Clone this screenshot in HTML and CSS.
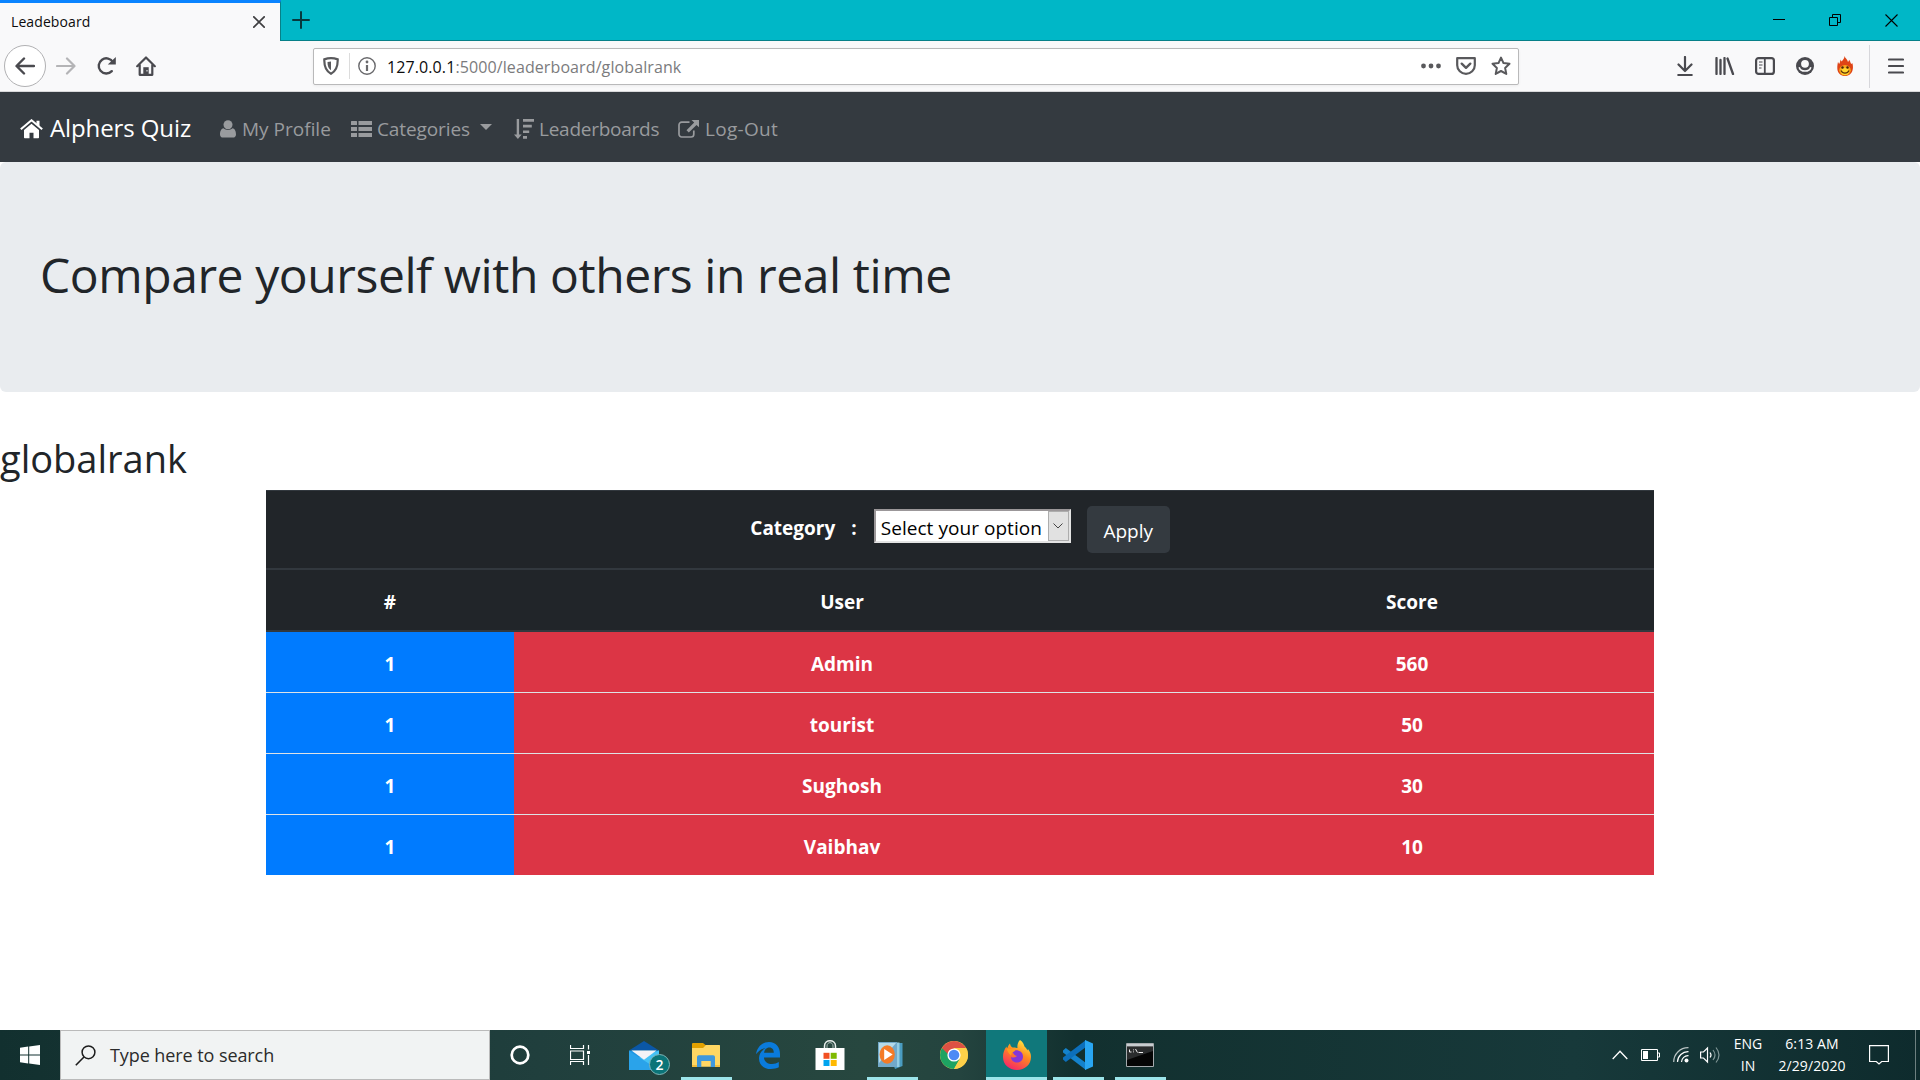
FILE: index.html
```html
<!DOCTYPE html>
<html lang="en">
<head>
<meta charset="utf-8">
<title>Leadeboard</title>
<link rel="stylesheet" href="styles.css">
</head>
<body>
<div class="screen">
  <header class="tabbar">
    <div class="tab"><span class="t tab-title">Leadeboard</span>
      <svg class="tab-close" width="12" height="12" viewBox="0 0 12 12"><path d="M.8.8l10.400 10.400M11.200.8L.8 11.200" stroke="#3e3e40" stroke-width="1.700" stroke-linecap="round"/></svg>
    </div>
    <svg class="newtab" width="18" height="18" viewBox="0 0 18 18"><path d="M9 1v16M1 9h16" stroke="#07393d" stroke-width="2" stroke-linecap="round"/></svg>
    <div class="winctl">
      <svg width="12" height="12" viewBox="0 0 12 12"><path d="M0 5.500h12" stroke="#000"/></svg>
      <svg width="12" height="12" viewBox="0 0 12 12"><path d="M.5 3.500h8v8h-8zM3.500 3.500v-3h8v8h-3" fill="none" stroke="#000"/></svg>
      <svg width="13" height="13" viewBox="0 0 13 13"><path d="M.5.5l12 12M12.500.5l-12 12" stroke="#000" stroke-width="1.100"/></svg>
    </div>
  </header>
  <div class="toolbar">
    <div class="nav-buttons">
      <div class="back"><svg width="20" height="18" viewBox="0 0 20 18"><path d="M19 9H2M9 1.500L1.500 9 9 16.500" fill="none" stroke="#4a4a4f" stroke-width="2.400" stroke-linecap="round" stroke-linejoin="round"/></svg></div>
      <svg width="20" height="18" viewBox="0 0 20 18"><path d="M1 9h17M11 1.500L18.500 9 11 16.500" fill="none" stroke="#b4b4b6" stroke-width="2.200" stroke-linecap="round" stroke-linejoin="round"/></svg>
      <svg width="20" height="20" viewBox="0 0 20 20"><path d="M15.800 15.200A7.600 7.600 0 1 1 17 6.300" fill="none" stroke="#4a4a4f" stroke-width="2.400" stroke-linecap="round"/><path d="M19.800 1v7.600h-8z" fill="#4a4a4f"/></svg>
      <svg width="20" height="20" viewBox="0 0 20 20"><path d="M1.200 10.200L10 1.500l8.800 8.700M3.700 9v9.800h12.600V9" fill="none" stroke="#4a4a4f" stroke-width="2.200" stroke-linecap="round" stroke-linejoin="round"/><path d="M7.300 18.500v-7.300h5.400v7.300z" fill="#4a4a4f"/><path d="M10.500 14h1v1.500h-1z" fill="#fff"/></svg>
    </div>
    <div class="urlbar">
      <svg width="16" height="18" viewBox="0 0 16 18"><path d="M8 1.200c2.300 0 4.500.4 6.700 1.200C14.900 9.500 13.500 14 8 16.700 2.500 14 1.100 9.500 1.300 2.400 3.500 1.600 5.700 1.200 8 1.200z" fill="none" stroke="#59595c" stroke-width="2.200"/><path d="M8 4.500v8.700C5.300 11.400 4.500 9 4.500 5c1.200-.3 2.300-.5 3.500-.5z" fill="#59595c"/></svg>
      <i class="usep"></i>
      <svg width="18" height="18" viewBox="0 0 18 18"><circle cx="9" cy="9" r="8.200" fill="none" stroke="#69696c" stroke-width="1.400"/><path d="M9 8v6" stroke="#69696c" stroke-width="2.200"/><circle cx="9" cy="5" r="1.400" fill="#69696c"/></svg>
      <span class="t url"><b>127.0.0.1</b>:5000/leaderboard/globalrank</span>
      <svg class="dots" width="20" height="6" viewBox="0 0 20 6"><g fill="#59595c"><circle cx="2.500" cy="3" r="2.400"/><circle cx="10" cy="3" r="2.400"/><circle cx="17.500" cy="3" r="2.400"/></g></svg>
      <svg class="pocket" width="20" height="18" viewBox="0 0 20 18"><path d="M1.200 1.200h17.600v7a8.800 8.600 0 0 1-17.600 0z" fill="none" stroke="#59595c" stroke-width="2.200" stroke-linejoin="round"/><path d="M5.700 6.700L10 10.800l4.300-4.100" fill="none" stroke="#59595c" stroke-width="2.400" stroke-linecap="round" stroke-linejoin="round"/></svg>
      <svg width="20" height="20" viewBox="0 0 20 20"><path d="M10 1.600l2.500 5.500 6 .7-4.400 4.100 1.200 6L10 15l-5.300 2.900 1.200-6L1.500 7.800l6-.7z" fill="none" stroke="#59595c" stroke-width="2" stroke-linejoin="round"/></svg>
    </div>
    <div class="ext">
      <svg width="16" height="20" viewBox="0 0 16 20"><path d="M8 1v13.500M1.500 8.500L8 15l6.500-6.500" fill="none" stroke="#4a4a4f" stroke-width="2.200" stroke-linecap="round" stroke-linejoin="round"/><path d="M1.200 19h13.600" stroke="#4a4a4f" stroke-width="2" stroke-linecap="round"/></svg>
      <svg class="library" width="20" height="18" viewBox="0 0 20 18"><path d="M1.500 1v16M5.500 3v14M9.500 1v16M12.500 1.500L18 17" stroke="#4a4a4f" stroke-width="2.300" stroke-linecap="round"/></svg>
      <svg width="20" height="18" viewBox="0 0 20 18"><rect x="1.100" y="1.100" width="17.800" height="15.800" rx="2.500" fill="none" stroke="#4a4a4f" stroke-width="2.200"/><path d="M9.800 1v16" stroke="#4a4a4f" stroke-width="1.800"/><path d="M4 5h3.500M4 8h3.500M4 11h2.500" stroke="#4a4a4f" stroke-width="1.200"/></svg>
      <svg class="account" width="18" height="18" viewBox="0 0 18 18"><circle cx="9" cy="9" r="9" fill="#4a4a4f"/><circle cx="9" cy="6.800" r="3.900" fill="#f9f9fa"/><path d="M3.200 10.200C4.500 15.300 13.500 15.300 14.800 10.200" stroke="#f9f9fa" stroke-width="1.600" fill="none"/></svg>
      <svg width="16" height="20" viewBox="0 0 16 20"><path d="M7.500 0c.5 2 3 3.500 3.500 6 .7-.5 1-1.300 1-2.300C13.500 5 13.200 7 14.500 8l.8-1c.9 2.500.7 5 .4 6.500C15 17.500 12 20 8 20S1 17.500.4 13.500C.2 11 .3 9 1 6c.5.700.8 1.200 1 2C3.500 6.500 2.500 5 4 3.500c0 1 .2 1.500.7 2C5.500 4 7.500 3 7.500 0z" fill="#df4416"/><ellipse cx="8" cy="14.200" rx="5.800" ry="5.300" fill="#f9a61a"/><ellipse cx="8" cy="15.500" rx="4" ry="3.500" fill="#ffd52e"/><circle cx="5.500" cy="11.500" r="1.200" fill="#46210a"/><circle cx="10.500" cy="11.500" r="1.200" fill="#46210a"/><path d="M4 14.500c1.500 3.500 6.500 3.500 8 0" fill="none" stroke="#5c3009" stroke-width="1.200"/></svg>
      <i class="tsep"></i>
      <svg width="16" height="16" viewBox="0 0 16 16"><path d="M1 1.500h14M1 8h14M1 14.500h14" stroke="#4a4a4f" stroke-width="2.200" stroke-linecap="round"/></svg>
    </div>
  </div>

  <nav class="navbar">
    <span class="brand"><svg width="23" height="20" viewBox="0 0 23 20"><path d="M11.500 4.800L19 11v7.500a.7.700 0 0 1-.7.700h-4.800v-5.400h-4v5.400H4.700a.7.700 0 0 1-.7-.7V11z" fill="#fff"/><path d="M.8 10.200L11.500 1.300l10.700 8.900" fill="none" stroke="#fff" stroke-width="2.100"/><path d="M16.500 1.800h3v6l-3-2.500z" fill="#fff"/></svg><span class="t">Alphers Quiz</span></span>
    <a class="item profile"><svg width="16" height="18" viewBox="0 0 16 18"><circle cx="8" cy="4.700" r="4.500"/><path d="M3.500 8.200c2.500 2.300 6.500 2.300 9 0C15 8.500 16 11.500 16 14.500c0 2-1.300 3.100-3 3.100H3c-1.700 0-3-1.100-3-3.100 0-3 1-6 3.500-6.300z"/></svg><span class="t">My Profile</span></a>
    <a class="item cats"><svg width="21" height="16" viewBox="0 0 21 16"><path d="M.6 0h4.800q.6 0 .6.600v3.400H0V.6Q0 0 .6 0zM7.500 0H21v4H7.500zM0 6h6v4H0zM7.500 6H21v4H7.500zM0 12h6v4H0zM7.500 12H21v4H7.500z"/></svg><span class="t">Categories</span><i class="caret"></i></a>
    <a class="item boards"><svg width="20" height="20" viewBox="0 0 20 20"><path d="M2.700 0h2.400v15.500h2.600L3.900 20 0 15.500h2.700zM9 0h11v2.700H9zM9 5.700h8.800v2.700H9zM9 11.400h6.200v2.700H9zM9 17h4v2.700H9z"/></svg><span class="t">Leaderboards</span></a>
    <a class="item logout"><svg width="21" height="18" viewBox="0 0 21 18"><path d="M11.500 2.200H3.700A2.700 2.700 0 0 0 1 4.900v9.400A2.700 2.700 0 0 0 3.700 17h9.400a2.700 2.700 0 0 0 2.700-2.700v-3.800" class="frame"/><path d="M13.500 0H21v7.300l-2.500-2.400-7.700 7.700-2.300-2.300 7.700-7.700z"/></svg><span class="t">Log-Out</span></a>
  </nav>

  <main>
    <section class="jumbotron"><h1><span class="t">Compare yourself with others in real time</span></h1></section>
    <h2><span class="t">globalrank</span></h2>
    <table>
      <colgroup><col class="c1"><col class="c2"><col class="c3"></colgroup>
      <thead>
        <tr class="filter"><th colspan="3"><div class="form"><span class="t label">Category</span><span class="colon">:</span>
          <span class="select"><span class="t opt">Select your option</span><span class="arrow"><svg width="10" height="6" viewBox="0 0 10 6"><path d="M.5.5L5 5 9.500.5" fill="none" stroke="#444"/></svg></span></span>
          <span class="apply"><span class="t">Apply</span></span></div></th></tr>
        <tr class="heads"><th>#</th><th>User</th><th>Score</th></tr>
      </thead>
      <tbody>
        <tr><th>1</th><td>Admin</td><td>560</td></tr>
        <tr><th>1</th><td>tourist</td><td>50</td></tr>
        <tr><th>1</th><td>Sughosh</td><td>30</td></tr>
        <tr><th>1</th><td>Vaibhav</td><td>10</td></tr>
      </tbody>
    </table>
  </main>

  <footer class="taskbar">
    <div class="start"><svg width="20" height="20" viewBox="0 0 20 20"><path d="M0 2.800L8.200 1.600v7.900H0zM9.200 1.500L20 0v9.500H9.200zM0 10.500h8.200v7.900L0 17.200zM9.200 10.500H20V20L9.200 18.500z" fill="#fff"/></svg></div>
    <div class="search"><svg width="21" height="21" viewBox="0 0 21 21"><circle cx="13.500" cy="7.300" r="6.400" fill="none" stroke="#1c1c1c" stroke-width="1.500"/><path d="M9 12L.8 20.300" stroke="#1c1c1c" stroke-width="1.600"/></svg><span class="t">Type here to search</span></div>
    <div class="cell60"><svg width="20" height="20" viewBox="0 0 20 20"><circle cx="10" cy="10" r="8.300" fill="none" stroke="#fff" stroke-width="2.700"/></svg></div>
    <div class="cell60 tv"><svg width="21" height="20" viewBox="0 0 21 20"><path d="M.5 0v3.500h13V0M.5 6h13v8.500H.5zM.5 20v-3.500h13V20M18.500 0v4.500M18.500 10v10" fill="none" stroke="#fff" stroke-width="1.200"/><path d="M17 6h3v3h-3z" fill="#fff"/></svg></div>
    <div class="app mail"><svg width="30" height="29" viewBox="0 0 30 29"><path d="M0 9.500L15 0l15 9.500z" fill="#0b57a6"/><path d="M0 9.500h30V29H0z" fill="#1e96e3"/><path d="M30 9.500V29L9 17z" fill="#45c2f5"/><path d="M0 10v19h30z" fill="#2aa3ea"/><path d="M2.500 9.500h25L15 18.800z" fill="#f3f3f7"/></svg><span class="badge">2</span></div>
    <div class="app run"><svg width="28" height="24" viewBox="0 0 28 24"><path d="M0 1q0-1 1-1h10l2.500 2H27q1 0 1 1v6H0z" fill="#e2a100"/><path d="M0 5h11l3-3h13q1 0 1 1v20q0 .8-1 .8H1q-1 0-1-.8z" fill="#ffd763"/><path d="M5 24V14q0-1.800 1.800-1.800h14.400Q23 12.200 23 14v10h-4.300v-6H9.300v6z" fill="#3f98dc"/><path d="M0 22h5v2H0zM23 22h5v2h-5z" fill="#f3bd3b"/></svg></div>
    <div class="app"><svg width="24" height="27" viewBox="0 0 24 27"><path d="M0 12.200C1.300 4.500 6.500 0 13 0c7 0 11 5.300 11 12v3.500H8c.3 4.700 4 6.500 8 6.500 2.700 0 4.900-.8 6.800-2v5.300C20.500 26.400 18 27 14.800 27 7.500 27 3 22.700 3 16.300c0-4.300 2.300-8 6.500-10C5.500 6.300 2 9.500 0 12.200zM8.100 10.800h9.700c0-3-1.400-5.300-4.500-5.300-3 0-4.800 2.400-5.200 5.300z" fill="#0a7bdc"/></svg></div>
    <div class="app"><svg width="30" height="30" viewBox="0 0 30 30"><path d="M9.500 8V6c0-7 11-7 11 0v2" fill="none" stroke="#e9efed" stroke-width="1.500"/><path d="M12 8V6c0-4.500 6-4.500 6 0v2" fill="none" stroke="#aabab5"/><path d="M.5 8h29v22H.5z" fill="#fff"/><path d="M8.500 12.800h6v6h-6z" fill="#f25022"/><path d="M15.700 12.800h6v6h-6z" fill="#7fba00"/><path d="M8.500 20h6v6h-6z" fill="#00a4ef"/><path d="M15.700 20h6v6h-6z" fill="#ffb900"/></svg></div>
    <div class="app run media"><svg width="25" height="28" viewBox="0 0 25 28"><path d="M7 2h17.500v23L17 28z" fill="#4a9cc1"/><path d="M4 1.500h17.500V26H4z" fill="#94cde3"/><path d="M0 1h19v25H0z" fill="#72a9c9"/><path d="M1 2h17L1 22z" fill="#b5dae8"/><ellipse cx="9.200" cy="13.500" rx="7.600" ry="9.300" fill="#f47b27"/><path d="M6.200 8v11l8.500-5.500z" fill="#fff"/></svg></div>
    <div class="app"><svg width="28" height="28" viewBox="0 0 28 28"><circle cx="14" cy="14" r="14" fill="#fdd049"/><path d="M1.900 7A14 14 0 0 1 26.100 7H14L8 17.500z" fill="#dd5144"/><path d="M1.900 7A14 14 0 0 0 14 28l6-10.500L14 19z" fill="#1ea362"/><path d="M26.100 7H14v7l6 3.500L14 28A14 14 0 0 0 26.100 7z" fill="#fdd049"/><circle cx="14" cy="14" r="6.600" fill="#fff"/><circle cx="14" cy="14" r="5.300" fill="#4c8bf5"/></svg></div>
    <div class="app run active"><svg width="28" height="30" viewBox="0 0 28 30"><defs><linearGradient id="fx" x1=".8" y1="0" x2=".3" y2="1"><stop offset="0" stop-color="#fff044"/><stop offset=".45" stop-color="#ff8a1f"/><stop offset="1" stop-color="#f6246a"/></linearGradient></defs><path d="M17 0c3 2 4 4.500 4.500 6.500C23 8 24 9 24.300 10.500l.7-1.500c2 2.500 3 5 3 8C28 24.500 22 30 14 30S0 24.500 0 17c0-4 1.200-7.500 3.500-10.500L4 9c.7-2.300 1.500-4 3-5.500.3 2 1 3 2.500 4 2-.3 4 .2 5 .5C14 5 15 2 17 0z" fill="url(#fx)"/><path d="M9 11c5-2 11 0 11 5.500 0 4-3 6-6.200 6C10.500 22.500 8 20 8 17c2 1 4 .7 6-1-2.500-.3-3.500-2-5-5z" fill="#8336d8"/><path d="M3.500 8c3 1.500 6 .5 9 1.200-.3 2-2 2.700-3.500 3.300l-1 3c-2-2-4-4-4.500-7.500z" fill="#ff9b20"/></svg></div>
    <div class="app run"><svg width="30" height="30" viewBox="0 0 30 30"><path d="M0 10.500L2.800 8 23 23v7L0 12.500z" fill="#1482cc"/><path d="M0 19.500L2.800 22 23 7V0L0 17.500z" fill="#0c6fbb"/><path d="M22 0l8 3.500v23L22 30z" fill="#29a6f2"/></svg></div>
    <div class="app run"><svg width="28" height="24" viewBox="0 0 28 24"><path d="M.5.500h27v23H.5z" fill="#050505" stroke="#a5aaad"/><path d="M1 1h26v2.500H1z" fill="#c8cdd0"/><path d="M1 4h26v4L1 17z" fill="#2a2c2d"/><path d="M3.500 6.500v2.500h2M7.500 6.500v.8M7.500 8.500v.8M9.500 6l2 3.500M12.500 9.500H17" fill="none" stroke="#eee"/></svg></div>
    <div class="tray">
      <svg class="up" width="16" height="10" viewBox="0 0 16 10"><path d="M.7 9L8 1.200 15.300 9" fill="none" stroke="#fff" stroke-width="1.300"/></svg>
      <svg class="bat" width="19" height="12" viewBox="0 0 19 12"><path d="M.5.5h16v11H.5zM17 4h1.500v4H17" fill="none" stroke="#fff"/><path d="M2 2h5v8H2z" fill="#fff"/></svg>
      <svg class="wifi" width="16" height="16" viewBox="0 0 16 16"><g fill="none" stroke="#fff" stroke-width="1.200"><path d="M.7 15A14.300 14.300 0 0 1 15.500.7" opacity=".7"/><path d="M4.500 15A10.500 10.500 0 0 1 15.500 4.700"/><path d="M8.500 15a6.500 6.500 0 0 1 7-6.300"/></g><circle cx="13.500" cy="13.500" r="2" fill="#fff"/></svg>
      <svg class="vol" width="21" height="18" viewBox="0 0 21 18"><path d="M.6 6h2.900L7.500 2v14l-4-4H.6z" fill="none" stroke="#fff" stroke-width="1.200"/><path d="M10 6.500q2 2.500 0 5" fill="none" stroke="#fff" stroke-width="1.200"/><path d="M13 4q4 5 0 10M16 1.500q6 7.500 0 15" fill="none" stroke="#7f9595" stroke-width="1.200"/></svg>
      <div class="lang"><span class="t">ENG</span><span class="t">IN</span></div>
      <div class="clock"><span class="t">6:13 AM</span><span class="t">2/29/2020</span></div>
      <svg class="note" width="20" height="20" viewBox="0 0 20 20"><path d="M.6.6h18.800v15.900h-6.700L10 19l-2.700-2.500H.6z" fill="none" stroke="#fff" stroke-width="1.200"/></svg>
      <i class="peek"></i>
    </div>
  </footer>
</div>
</body>
</html>
```
FILE: styles.css
```css
* { box-sizing: border-box; }
body { margin: 0; font-family: "Open Sans", "Noto Sans", sans-serif; font-size: 19px; color: #212529; background: #fff; }
svg { display: block; flex: none; }
.screen { width: 1920px; height: 1080px; overflow: hidden; display: flex; flex-direction: column; }
.t { white-space: nowrap; }

.tabbar { height: 41px; flex: none; background: #00b7c7; border-bottom: 1px solid #078088; display: flex; }
.tab { width: 281px; height: 41px; background: #f9f9fa; border-top: 3px solid #0a84ff; border-right: 1px solid #078088; display: flex; align-items: center; justify-content: space-between; padding: 0 15px 0 11px; }
.tab-title { font-size: 14px; color: #0c0c0d; letter-spacing: .1px; padding-bottom: 2px; }
.newtab { margin: 11px 0 0 11px; }
.winctl { margin-left: auto; display: flex; gap: 44px; padding: 14px 22px 0 0; }
.toolbar { height: 51px; flex: none; background: #f9f9fa; border-bottom: 1px solid #d8d8da; display: flex; align-items: center; }
.nav-buttons { width: 313px; display: flex; align-items: center; gap: 20px; padding-left: 4px; }
.back { width: 42px; height: 42px; margin-right: -10px; border: 1px solid #b1b1b3; border-radius: 50%; background: #fff; display: flex; align-items: center; justify-content: center; }
.urlbar { width: 1206px; height: 37px; background: #fff; border: 1px solid #b9b9ba; border-radius: 2px; display: flex; align-items: center; padding: 0 7px 0 9px; box-shadow: 0 1px 3px rgba(0,0,0,.06); }
.usep { width: 1px; height: 26px; background: #dcdcdc; margin: 0 8px 0 10px; }
.url { font-size: 16px; color: #7b7b7d; margin-left: 11px; letter-spacing: .1px; padding-top: 2px; }
.url b { font-weight: 400; color: #0c0c0d; }
.dots { margin-left: auto; }
.pocket { margin: 0 15px; }
.ext { margin-left: auto; display: flex; align-items: center; padding-right: 16px; gap: 22px; }
.library { margin-right: -2px; }
.account { margin: 0 1px 0 -1px; }
.tsep { width: 1px; height: 43px; background: #d7d7db; margin: 0 -4px 0 -6px; }

.navbar { height: 70px; flex: none; background: #343a40; display: flex; align-items: center; padding: 4px 0 0 20px; color: #999b9e; }
.navbar svg { fill: currentColor; }
.navbar .frame { fill: none; stroke: currentColor; stroke-width: 1.7; }
.brand { display: flex; align-items: center; gap: 7px; color: #fff; font-size: 24px; letter-spacing: -.1px; width: 200px; }
.brand .t { padding-bottom: 3px; }
.item { display: flex; align-items: center; gap: 6px; }
.profile { width: 131px; }
.cats { width: 163px; gap: 5px; letter-spacing: -.1px; }
.boards { width: 164px; gap: 5px; letter-spacing: -.25px; }
.logout { letter-spacing: .3px; }
.caret { border: 6px solid transparent; border-top-color: currentColor; border-bottom: 0; margin: -4px 0 0 5px; }

main { flex: 1; }
.jumbotron { height: 230px; background: #e9ecef; border-radius: 6px; padding: 81px 40px 0; }
h1, h2 { font-weight: 400; margin: 0; }
h1 { font-size: 48px; line-height: 64px; letter-spacing: -.43px; }
h2 { font-size: 38px; line-height: 48px; margin: 42px 0 8px; }
table { width: 1388px; margin: 0 auto; border-collapse: separate; border-spacing: 0; table-layout: fixed; text-align: center; color: #fff; font-weight: 700; }
.c1 { width: 248px; }
.c2 { width: 656px; }
th, td { padding: 4px 0 0; line-height: 30px; }
thead th { background: #212529; }
.filter th { height: 80px; border-top: 1px solid #32383e; border-bottom: 2px solid #32383e; }
.heads th { height: 62px; border-bottom: 2px solid #32383e; }
tbody th, tbody td { height: 61px; background: #dc3545; border-top: 1px solid #dee2e6; }
tbody tr:first-child > * { height: 60px; border-top: 0; }
tbody th { background: #007bff; }
.form { display: flex; justify-content: center; align-items: flex-start; height: 62px; padding-top: 5px; }
.label { margin-top: 7px; }
.colon { margin: 7px 17px 0 16px; }
.select { width: 197px; height: 34px; margin-top: 3px; border: 2px solid #e3e3e3; border-top-color: #9b9799; border-left-color: #9b9799; background: #fff; color: #000; font-weight: 400; display: flex; justify-content: space-between; padding-left: 5px; }
.opt { line-height: 34px; letter-spacing: .05px; }
.arrow { width: 21px; height: 30px; background: #e1e1e1; border: 1px solid #adadad; display: flex; align-items: center; justify-content: center; }
.apply { width: 83px; height: 47px; margin-left: 16px; background: #343a40; border-radius: 5px; font-weight: 400; line-height: 50px; }

.taskbar { height: 50px; flex: none; display: flex; background: linear-gradient(90deg, #12302f 0, #203f3d 28%, #27473f 45%, #24443f 50%, #12302f 56%, #17393a 82%, #0e2b2d 100%); color: #fff; }
.start { width: 60px; display: flex; align-items: center; justify-content: center; }
.search { width: 430px; background: #f1f3f3; border: 1px solid #bababa; display: flex; align-items: center; padding-left: 14px; gap: 14px; color: #2b2b2b; font-size: 18px; letter-spacing: -.08px; }
.cell60 { width: 60px; display: flex; align-items: center; justify-content: center; }
.tv { margin-right: 3px; }
.app { width: 62px; height: 50px; display: flex; align-items: center; justify-content: center; position: relative; }
.run { background: linear-gradient(#9ce5ea, #9ce5ea) center bottom / 51px 3px no-repeat; }
.media { padding-right: 3px; }
.active { width: 61px; margin-left: 1px; background: linear-gradient(#9ce5ea, #9ce5ea) center bottom / 61px 3px no-repeat, #10787b; }
.badge { position: absolute; left: 36px; top: 24px; width: 21px; height: 21px; border-radius: 50%; background: #0b7478; border: 1px solid #7fb5b5; font-size: 14px; font-weight: 600; line-height: 19px; text-align: center; }
.tray { margin-left: auto; display: flex; align-items: center; font-size: 14px; }
.bat { margin-left: 13px; }
.wifi { margin-left: 13px; }
.vol { margin-left: 11px; }
.lang, .clock { display: flex; flex-direction: column; align-items: center; line-height: 22px; }
.lang { width: 40px; margin-left: 7px; }
.clock { width: 80px; margin-left: 4px; letter-spacing: .1px; }
.note { margin-left: 17px; }
.peek { width: 1px; height: 50px; background: #6d8080; margin: 0 4px 0 26px; }
```
